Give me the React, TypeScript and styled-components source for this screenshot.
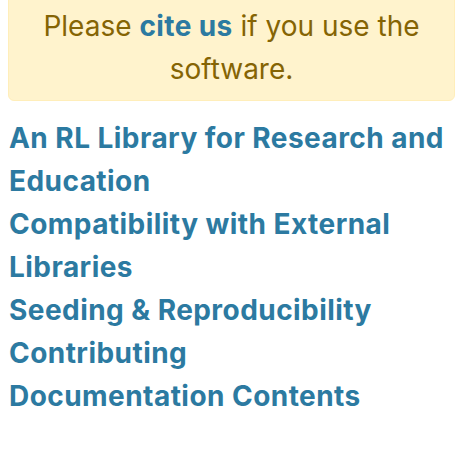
import React from "react";
import styled, { createGlobalStyle } from "styled-components";

const GlobalStyle = createGlobalStyle`
  html, body {
    margin: 0;
    padding: 0;
    background: #ffffff;
    overflow: hidden;
  }
  body {
    font-family: Inter, "Noto Sans", "Liberation Sans", sans-serif;
  }
`;

const Page = styled.div`
  padding: 0 7px 0 8px;
`;

const Notice = styled.div`
  margin-top: -10px;
  padding: 14px 16px 9px;
  background-color: #fff3cd;
  border: 1px solid #ffeeba;
  border-radius: 6px;
  color: #856404;
  font-size: 28px;
  line-height: 43px;
  text-align: center;
`;

const NoticeLink = styled.a`
  color: #2c7aa1;
  font-weight: 700;
  letter-spacing: 0.4px;
  text-decoration: none;
`;

const TocList = styled.ul`
  list-style: none;
  margin: 16px 0 0;
  padding: 0 0 0 1px;
`;

const TocItem = styled.li`
  font-size: 28px;
  line-height: 43px;
`;

const TocLink = styled.a`
  color: #2c7aa1;
  font-weight: 700;
  letter-spacing: 0.45px;
  text-decoration: none;
`;

const sections = [
  "An RL Library for Research and Education",
  "Compatibility with External Libraries",
  "Seeding & Reproducibility",
  "Contributing",
  "Documentation Contents",
];

const App = () => {
  return (
    <Page>
      <GlobalStyle />
      <Notice>
        Please <NoticeLink href="#">cite us</NoticeLink> if you use the
        software.
      </Notice>
      <TocList>
        {sections.map((title) => (
          <TocItem key={title}>
            <TocLink href="#">{title}</TocLink>
          </TocItem>
        ))}
      </TocList>
    </Page>
  );
};

export default App;
